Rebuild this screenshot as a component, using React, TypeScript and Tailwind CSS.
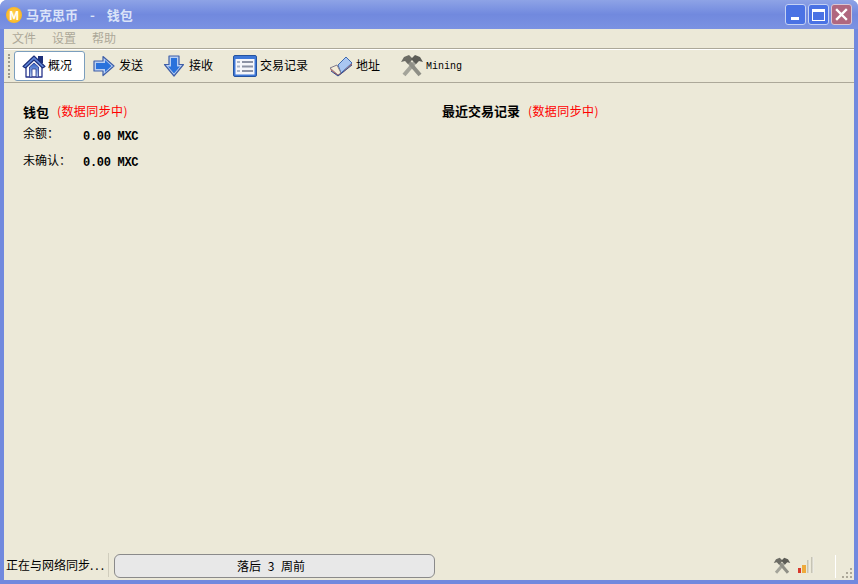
import React from 'react';

const cjk = '"Noto Sans CJK SC", sans-serif';
const mono = '"Liberation Mono", monospace';

const HomeIcon = () => (
  <svg width="24" height="24" viewBox="0 0 24 24">
    <defs>
      <linearGradient id="doorFill" x1="0" y1="0" x2="0" y2="1">
        <stop offset="0" stopColor="#2f5fc4" />
        <stop offset="1" stopColor="#b9cff0" />
      </linearGradient>
    </defs>
    <rect x="16" y="2" width="5" height="7" fill="#1d2f7a" />
    <path d="M4 12 L12 4 L20 12 V23 H4 Z" fill="#fff" stroke="#27358c" strokeWidth="1.3" strokeLinejoin="round" />
    <path d="M7.5 13 L12 9 L16.5 13 V23 H14 V15 H10 V23 H7.5 Z" fill="url(#doorFill)" stroke="#27358c" strokeWidth="0.8" />
    <path d="M1 12.5 L12 2 L23 12.5 L20.5 14 L12 6 L3.5 14 Z" fill="#5f86d8" stroke="#1d2f7a" strokeWidth="1.1" strokeLinejoin="round" />
  </svg>
);

const SendIcon = () => (
  <svg width="22" height="22" viewBox="0 0 22 22">
    <path d="M1 6 H10 V1.5 L21 11 L10 20.5 V16 H1 Z" fill="#b9cff2" stroke="#3f5fa8" strokeWidth="1.2" strokeLinejoin="round" />
    <path d="M3 8 H12 V5 L18.5 11 L12 17 V14 H3 Z" fill="#2a72dc" />
  </svg>
);

const ReceiveIcon = () => (
  <svg width="22" height="22" viewBox="0 0 22 22">
    <path d="M6 1 H16 V9.5 L20.5 9.5 L11 21 L1.5 9.5 L6 9.5 Z" fill="#b9cff2" stroke="#3f5fa8" strokeWidth="1.2" strokeLinejoin="round" />
    <path d="M8 3 H14 V11.5 H17 L11 18.5 L5 11.5 H8 Z" fill="#2a72dc" />
  </svg>
);

const ListIcon = () => (
  <svg width="24" height="22" viewBox="0 0 24 22">
    <rect x="0.5" y="0.5" width="23" height="21" rx="1.5" fill="#3f78d8" stroke="#24539f" />
    <rect x="2.5" y="4" width="19" height="15.5" fill="#f5f6fa" />
    <rect x="4" y="6" width="3" height="2" fill="#a9b4c8" />
    <rect x="4" y="10.5" width="3" height="2" fill="#a9b4c8" />
    <rect x="4" y="15" width="3" height="2" fill="#a9b4c8" />
    <rect x="9" y="6" width="11" height="2" fill="#8c92a4" />
    <rect x="9" y="10.5" width="11" height="2" fill="#8c92a4" />
    <rect x="9" y="15" width="11" height="2" fill="#8c92a4" />
  </svg>
);

const BookIcon = () => (
  <svg width="24" height="22" viewBox="0 0 24 22">
    <path d="M9 10 L17 2 L23 8 L12 18 Z" fill="#a9c6f2" stroke="#3f6bb0" strokeWidth="1" strokeLinejoin="round" />
    <path d="M1 13 L8 10 L12 18 L9 20 Z" fill="#f4ecd6" stroke="#7f7a8c" strokeWidth="1" strokeLinejoin="round" />
    <path d="M1.5 14.5 L9 20.5 L12.5 18.5 L23 9" fill="none" stroke="#c2564a" strokeWidth="1" />
    <path d="M2 16 L9 21 L23 10" fill="none" stroke="#2d4f95" strokeWidth="1" />
  </svg>
);

const HammersIcon = ({ size }: { size: number }) => (
  <svg width={size} height={size} viewBox="0 0 24 24">
    <path d="M4 21 L16 7" stroke="#a4a49a" strokeWidth="4" />
    <path d="M20 21 L8 7" stroke="#8f8f86" strokeWidth="4" />
    <path d="M1 8 L4 3 L9 1 L13 5 L8 10 L5 7 Z" fill="#6c6c65" />
    <path d="M23 8 L20 3 L15 1 L11 5 L16 10 L19 7 Z" fill="#5c5c56" />
  </svg>
);

const SignalIcon = () => (
  <svg width="16" height="16" viewBox="0 0 16 16">
    <defs>
      <linearGradient id="barFade" x1="0" y1="0" x2="1" y2="0">
        <stop offset="0" stopColor="#bdbaa9" />
        <stop offset="1" stopColor="#f6f5ee" />
      </linearGradient>
    </defs>
    <rect x="0" y="11" width="3" height="5" fill="#d8382c" />
    <rect x="4" y="8" width="4" height="8" fill="#eeaa3c" />
    <rect x="9" y="3" width="3" height="13" fill="url(#barFade)" />
    <rect x="13" y="0" width="3" height="16" fill="url(#barFade)" />
  </svg>
);

const tabs = [
  { label: '发送', icon: <SendIcon />, pad: 'ml-[8px]', gap: 'ml-[4px]' },
  { label: '接收', icon: <ReceiveIcon />, pad: 'ml-[20px]', gap: 'ml-[4px]' },
  { label: '交易记录', icon: <ListIcon />, pad: 'ml-[20px]', gap: 'ml-[3px]' },
  { label: '地址', icon: <BookIcon />, pad: 'ml-[21px]', gap: 'ml-[3px]' },
];

const App: React.FC = () => {
  return (
    <div
      className="w-[858px] h-[584px] flex flex-col overflow-hidden rounded-t-[7px] bg-[#7189de] text-black text-[12px]"
      style={{ fontFamily: cjk }}
    >
      {/* Title bar */}
      <div className="h-[29px] shrink-0 flex items-center pl-[6px] pr-[6px] bg-gradient-to-b from-[#8ea3e6] via-[#7189de] to-[#7b92e2]">
        <div className="w-[16px] h-[16px] rounded-full bg-[radial-gradient(circle,#ffd75a,#f9a90e)] flex items-center justify-center text-white text-[12px] font-bold leading-none">
          M
        </div>
        <div className="ml-[4px] text-[13px] font-bold leading-none text-[#dbe3f8] whitespace-pre [word-spacing:9px]">马克思币 - 钱包</div>
        <div className="ml-auto flex items-center gap-[2px]">
          <div className="w-[21px] h-[21px] rounded-[3px] border border-[#c5d2f4] bg-[#4a72e4] flex items-end pl-[5px] pb-[4px]">
            <div className="w-[8px] h-[3px] bg-white" />
          </div>
          <div className="w-[21px] h-[21px] rounded-[3px] border border-[#c5d2f4] bg-[#4a72e4] flex items-center justify-center">
            <div className="w-[13px] h-[12px] border border-white border-t-[3px]" />
          </div>
          <div className="w-[21px] h-[21px] rounded-[3px] border border-[#d9c6d4] bg-[#b0677f] flex items-center justify-center">
            <svg width="13" height="13" viewBox="0 0 13 13">
              <path d="M2 2 L11 11 M11 2 L2 11" stroke="#fff" strokeWidth="2.4" strokeLinecap="square" />
            </svg>
          </div>
        </div>
      </div>

      {/* Window body */}
      <div className="flex-1 min-h-0 mx-[4px] mb-[4px] bg-[#ece9d8] flex flex-col">
        {/* Menu */}
        <div className="h-[20px] shrink-0 flex items-center pl-[8px] pb-[2px] gap-[16px] border-b border-[#aca899] text-[#aca899] leading-none">
          <span>文件</span>
          <span>设置</span>
          <span>帮助</span>
        </div>

        {/* Toolbar */}
        <div className="h-[33px] shrink-0 flex items-center pl-[4px] border-t border-white">
          <div className="w-[3px] h-[24px] mr-[3px] border-l-2 border-dotted border-[#9d9a8b]" />
          <div className="h-[30px] w-[71px] flex items-center pl-[7px] bg-white border border-[#7b9ebd] rounded-[3px]">
            <HomeIcon />
            <span className="ml-[2px] -translate-y-[1px]">概况</span>
          </div>
          {tabs.map((t) => (
            <div key={t.label} className={`flex items-center ${t.pad}`}>
              {t.icon}
              <span className={`${t.gap} whitespace-nowrap -translate-y-[1px]`}>{t.label}</span>
            </div>
          ))}
          <div className="flex items-center ml-[20px]">
            <HammersIcon size={24} />
            <span className="ml-[2px] text-[10px]" style={{ fontFamily: mono }}>Mining</span>
          </div>
        </div>
        <div className="h-[1px] shrink-0 bg-[#aca899]" />

        {/* Overview */}
        <div className="flex-1 min-h-0 flex pl-[19px] pt-[21px]">
          <div className="w-[419px]">
            <div className="flex items-center h-[16px] leading-none -translate-y-[1px]">
              <span className="font-bold text-[13px]">钱包</span>
              <span className="ml-[8px] text-[#ff0000] tracking-[0.4px]">(数据同步中)</span>
            </div>
            <div className="flex items-start h-[18px] mt-[7px] leading-none">
              <span className="w-[60px] text-[12px]">余额：</span>
              <span className="font-bold text-[12px] tracking-[-0.3px] mt-[4px]" style={{ fontFamily: mono }}>0.00 MXC</span>
            </div>
            <div className="flex items-start h-[18px] mt-[9px] leading-none">
              <span className="w-[60px] text-[12px]">未确认：</span>
              <span className="font-bold text-[12px] tracking-[-0.3px] mt-[3px]" style={{ fontFamily: mono }}>0.00 MXC</span>
            </div>
          </div>
          <div className="flex items-start h-[16px] -translate-y-[1px]">
            <span className="font-bold text-[13px] leading-[16px]">最近交易记录</span>
            <span className="ml-[8px] text-[#ff0000] leading-[16px] tracking-[0.4px]">(数据同步中)</span>
          </div>
        </div>

        {/* Status bar */}
        <div className="h-[30px] shrink-0 flex items-center pl-[2px] relative">
          <span className="w-[102px] whitespace-nowrap">正在与网络同步<span className="tracking-[2px]">...</span></span>
          <div className="w-[1px] h-[24px] bg-[#d0cdbd] mr-[5px]" />
          <div className="w-[321px] h-[24px] mt-[2px] pr-[7px] rounded-[6px] border border-[#8a8a8a] bg-[#e8e8e8] flex items-center justify-center whitespace-pre [word-spacing:4px]">
            落后 3 周前
          </div>
          <div className="ml-auto flex items-center mr-[18px] mt-[2px]">
            <HammersIcon size={18} />
            <div className="ml-[7px] -translate-y-[1px]"><SignalIcon /></div>
            <div className="w-[1px] h-[23px] bg-white ml-[21px]" />
          </div>
          <svg className="absolute right-[1px] bottom-[1px]" width="12" height="12" viewBox="0 0 12 12">
            <g fill="#aca899">
              <rect x="9" y="1" width="2" height="2" />
              <rect x="5" y="5" width="2" height="2" />
              <rect x="9" y="5" width="2" height="2" />
              <rect x="1" y="9" width="2" height="2" />
              <rect x="5" y="9" width="2" height="2" />
              <rect x="9" y="9" width="2" height="2" />
            </g>
          </svg>
        </div>
      </div>
    </div>
  );
};

export default App;
